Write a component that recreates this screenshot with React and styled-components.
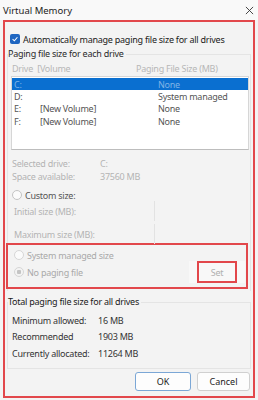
import styled, { createGlobalStyle } from 'styled-components';

const GlobalStyle = createGlobalStyle`
  html, body {
    margin: 0;
    padding: 0;
    background: #f3f3f3;
  }
  body {
    font-family: "Noto Sans", "Open Sans", sans-serif;
    font-size: 9px;
    letter-spacing: -0.25px;
    color: #1f1f1f;
  }
`;

const DRIVES = [
  { letter: 'C:', volume: '', size: 'None', selected: true },
  { letter: 'D:', volume: '', size: 'System managed' },
  { letter: 'E:', volume: '[New Volume]', size: 'None' },
  { letter: 'F:', volume: '[New Volume]', size: 'None' },
];

const TOTALS = [
  { label: 'Minimum allowed:', value: '16 MB' },
  { label: 'Recommended', value: '1903 MB' },
  { label: 'Currently allocated:', value: '11264 MB' },
];

export default function App() {
  return (
    <Window>
      <GlobalStyle />
      <TitleBar>
        <Title>Virtual Memory</Title>
        <CloseIcon viewBox="0 0 10 10">
          <path d="M1 1 L9 9 M9 1 L1 9" stroke="#333" strokeWidth="1" />
        </CloseIcon>
      </TitleBar>

      <Body>
        <CheckRow>
          <CheckBox>
            <svg viewBox="0 0 10 10" width="8" height="8">
              <path d="M2 5.2 L4.2 7.3 L8 2.8" stroke="#fff" strokeWidth="1.3" fill="none" />
            </svg>
          </CheckBox>
          <span>Automatically manage paging file size for all drives</span>
        </CheckRow>

        <Group>
          <Legend>Paging file size for each drive</Legend>
          <ListHeader>
            <span>Drive&nbsp;&nbsp;[Volume</span>
            <span>Paging File Size (MB)</span>
          </ListHeader>
          <ListBox>
            {DRIVES.map((d) => (
              <DriveRow key={d.letter} $selected={d.selected}>
                <DriveLetter>{d.letter}</DriveLetter>
                <DriveVolume>{d.volume}</DriveVolume>
                <span>{d.size}</span>
              </DriveRow>
            ))}
          </ListBox>

          <InfoBlock>
            <InfoRow>
              <InfoLabel>Selected drive:</InfoLabel>
              <span>C:</span>
            </InfoRow>
            <InfoRow>
              <InfoLabel>Space available:</InfoLabel>
              <span>37560 MB</span>
            </InfoRow>
          </InfoBlock>

          <RadioRow $top={5}>
            <Radio $light />
            <RadioText>Custom size:</RadioText>
          </RadioRow>
          <SizeRow $top={-1}>
            <SizeLabel>Initial size (MB):</SizeLabel>
            <SizeInput />
          </SizeRow>
          <SizeRow $top={3}>
            <SizeLabel>Maximum size (MB):</SizeLabel>
            <SizeInput />
          </SizeRow>

          <Highlight>
            <RadioRow $top={0}>
              <Radio />
              <RadioText $faded>System managed size</RadioText>
            </RadioRow>
            <NoPagingRow>
              <RadioRow $top={0}>
                <Radio $checked />
                <RadioText $faded>No paging file</RadioText>
              </RadioRow>
              <SetButton>
                <SetMark>Set</SetMark>
              </SetButton>
            </NoPagingRow>
          </Highlight>
        </Group>

        <Group $second>
          <Legend $dark>Total paging file size for all drives</Legend>
          <Totals>
            {TOTALS.map((t) => (
              <TotalRow key={t.label}>
                <TotalLabel>{t.label}</TotalLabel>
                <span>{t.value}</span>
              </TotalRow>
            ))}
          </Totals>
        </Group>

        <Footer>
          <Button $primary>OK</Button>
          <Button>Cancel</Button>
        </Footer>
      </Body>
    </Window>
  );
}

const Window = styled.div`
  width: 258px;
  height: 400px;
  display: flex;
  flex-direction: column;
  background: #f3f3f3;
  overflow: hidden;
`;

const TitleBar = styled.div`
  height: 20px;
  display: flex;
  align-items: center;
  justify-content: space-between;
  padding: 0 4px 0 3px;
  background: #f9f9f9;
`;

const Title = styled.span`
  font-size: 9.5px;
  letter-spacing: 0;
  color: #222;
`;

const CloseIcon = styled.svg`
  width: 9px;
  height: 9px;
`;

const Body = styled.div`
  margin: 0 3px 2px 3px;
  flex: 1;
  border: 2px solid #e2474b;
  display: flex;
  flex-direction: column;
  padding: 10px 0 0 0;
`;

const CheckRow = styled.div`
  display: flex;
  align-items: center;
  gap: 3px;
  height: 14px;
  padding-left: 5px;
  color: #1a1a1a;
`;

const CheckBox = styled.div`
  width: 10px;
  height: 10px;
  border-radius: 2px;
  background: #1f66c1;
  display: flex;
  align-items: center;
  justify-content: center;
`;

const Group = styled.fieldset`
  margin: ${({ $second }) => ($second ? '5px' : '2px')} 2px 0 2px;
  padding: 0;
  border: 1px solid #e4e4e4;
  border-bottom: ${({ $second }) => ($second ? '1px solid #e4e4e4' : 'none')};
  min-width: 0;
`;

const Legend = styled.legend`
  padding: 0 2px 0 0;
  margin-left: 0;
  color: ${({ $dark }) => ($dark ? '#1a1a1a' : '#2a2a2a')};
  font-size: 9px;
  line-height: 12px;
`;

const ListHeader = styled.div`
  display: grid;
  grid-template-columns: 124px 1fr;
  align-items: center;
  padding-left: 4px;
  height: 16px;
  color: #b7b7b7;
`;

const ListBox = styled.div`
  margin: 0 1px 0 3px;
  height: 74px;
  box-sizing: border-box;
  border: 1px solid #d6d6d6;
  border-bottom-color: #bdbdbd;
  background: #ffffff;
  padding-top: 1px;
`;

const DriveRow = styled.div`
  display: flex;
  align-items: center;
  height: 12.3px;
  padding-left: 2px;
  color: ${({ $selected }) => ($selected ? '#7fb3e6' : '#555')};
  background: ${({ $selected }) => ($selected ? '#0a6fd0' : 'transparent')};
`;

const DriveLetter = styled.span`
  width: 26px;
`;

const DriveVolume = styled.span`
  width: 118px;
`;

const InfoBlock = styled.div`
  margin-top: 7px;
`;

const InfoRow = styled.div`
  display: flex;
  height: 13px;
  align-items: center;
  padding-left: 4px;
  color: #b3b3b3;
`;

const InfoLabel = styled.span`
  width: 88px;
`;

const RadioRow = styled.div`
  display: flex;
  align-items: center;
  gap: 3px;
  height: 14px;
  margin-top: ${({ $top }) => $top}px;
  padding-left: 4px;
`;

const Radio = styled.span`
  width: 8px;
  height: 8px;
  border-radius: 50%;
  border: 1px solid ${({ $light }) => ($light ? '#c4c4c4' : '#d6d6d6')};
  background: ${({ $checked }) =>
    $checked ? 'radial-gradient(circle, #c4c4c4 0 2px, #f3f3f3 2.5px)' : '#fbfbfb'};
`;

const RadioText = styled.span`
  color: ${({ $faded }) => ($faded ? '#a9a9a9' : '#555')};
`;

const SizeRow = styled.div`
  display: flex;
  align-items: center;
  height: 20px;
  margin-top: ${({ $top }) => $top}px;
  padding-left: 6px;
  color: #b3b3b3;
`;

const SizeLabel = styled.span`
  width: 140px;
`;

const SizeInput = styled.div`
  flex: 1;
  height: 100%;
  margin-right: 1px;
  border-left: 1px solid #e2e2e2;
`;

const Highlight = styled.div`
  margin: -1px 2px 2px -2px;
  border: 2px solid #e2474b;
  padding: 3px 0 4px 2px;
`;

const NoPagingRow = styled.div`
  display: flex;
  align-items: center;
  justify-content: space-between;
  margin-top: -1px;
`;

const SetButton = styled.div`
  width: 56px;
  height: 22px;
  display: flex;
  align-items: center;
  justify-content: center;
  background: #f8f8f8;
  margin-right: 1px;
`;

const SetMark = styled.div`
  width: 36px;
  height: 18px;
  border: 2px solid #e2474b;
  display: flex;
  align-items: center;
  justify-content: center;
  color: #b0b0b0;
`;

const Totals = styled.div`
  padding: 4px 0 6px 4px;
`;

const TotalRow = styled.div`
  display: flex;
  align-items: center;
  height: 16.5px;
  color: #333;
`;

const TotalLabel = styled.span`
  width: 86px;
`;

const Footer = styled.div`
  display: flex;
  justify-content: flex-end;
  gap: 6px;
  padding: 3px 3px 0 0;
`;

const Button = styled.button`
  width: ${({ $primary }) => ($primary ? '56px' : '53px')};
  height: 19px;
  font: inherit;
  font-size: 9px;
  color: #222;
  background: #fdfdfd;
  border: 1px solid ${({ $primary }) => ($primary ? '#7ba7d6' : '#d0d0d0')};
  border-radius: 3px;
  padding: 0;
`;
